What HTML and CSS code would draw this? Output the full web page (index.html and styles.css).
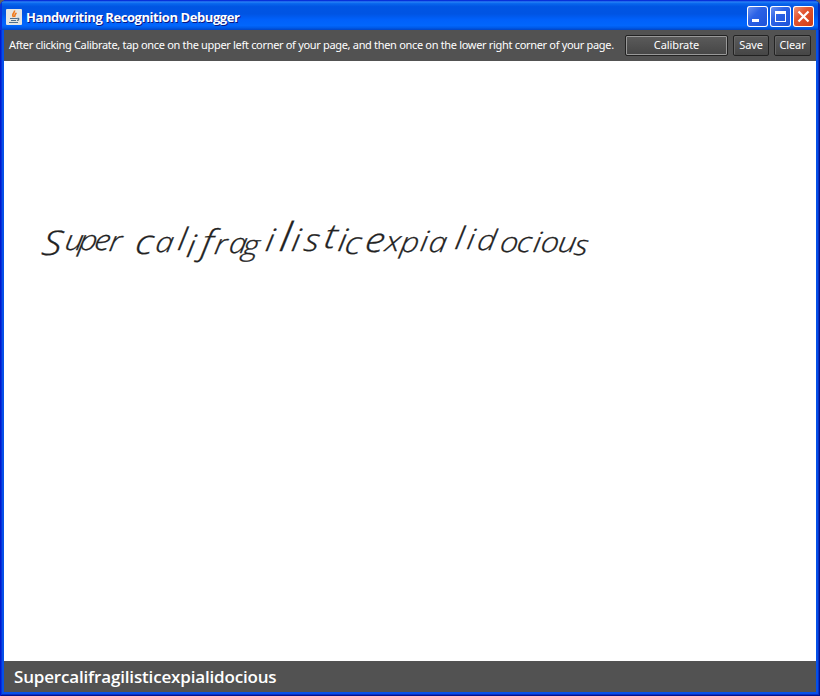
FILE: index.html
```html
<!DOCTYPE html>
<html lang="en">
<head>
<meta charset="utf-8">
<title>Handwriting Recognition Debugger</title>
<link rel="stylesheet" href="styles.css">
</head>
<body>
<div class="window">
  <header class="titlebar">
    <svg class="java" width="16" height="16" viewBox="0 0 16 16" fill="none">
      <rect width="16" height="16" rx="1" fill="#e6e6e2"/>
      <path d="M8.500 1.500C9 4 5 4.500 7.500 8M10.500 4C8 5.500 9.500 6 8.500 8" stroke="#ef7a1c" stroke-width="1.600"/>
      <path d="M4 9.500h7M5 11.500h5M3 13.500h9M11 9.500c2.500-1 2.500 1.500 0 2" stroke="#50708c" stroke-width="1.200"/>
    </svg>
    <h1 class="title">Handwriting Recognition Debugger</h1>
    <div class="controls">
      <button class="ctl" aria-label="Minimize"><svg width="21" height="21"><path d="M5 13h7v3H5z" fill="#fff"/></svg></button>
      <button class="ctl" aria-label="Maximize"><svg width="21" height="21"><path d="M5 5h11v11H5zM6 8v7h9V8z" fill="#fff" fill-rule="evenodd"/></svg></button>
      <button class="ctl close" aria-label="Close"><svg width="21" height="21"><path d="M5.500 5.500l10 10M15.500 5.500l-10 10" stroke="#fff" stroke-width="2.200"/></svg></button>
    </div>
  </header>
  <div class="toolbar">
    <p class="hint">After clicking Calibrate, tap once on the upper left corner of your page, and then once on the lower right corner of your page.</p>
    <button class="btn calibrate">Calibrate</button>
    <button class="btn save">Save</button>
    <button class="btn clear">Clear</button>
  </div>
  <main class="page">
    <svg class="ink" width="812" height="600" viewBox="4 61 812 600">
      <text class="script" transform="matrix(1.15 0 -.16 1 40.200 0)"><tspan class="cap" x="36" y="255">S</tspan><tspan x="55.500 67.500 81 94" y="250 250 250 251">uper</tspan><tspan class="cap" x="117" y="254">c</tspan><tspan x="134.500" y="252">a</tspan><tspan class="ascender" x="153.500" y="250">l</tspan><tspan class="ascender" x="162" y="257">i</tspan><tspan class="cap" x="174.500" y="254">f</tspan><tspan x="186 198.500 210.500" y="254 253 255">rag</tspan><tspan class="ascender" x="230" y="251">i</tspan><tspan class="tall" x="242" y="251">l</tspan><tspan class="ascender" x="252.500 263.500" y="251 251">is</tspan><tspan class="stem" x="280.500" y="248">t</tspan><tspan class="ascender" x="293 299" y="251 254">ic</tspan><tspan class="cap" x="316.500" y="252">e</tspan><tspan x="334 347.500 364.500 372" y="251 252 251 252">xpia</tspan><tspan class="ascender" x="394.500" y="249">l</tspan><tspan x="405 414 434 448.500 463 469.500 484.500 499" y="249 250 252 252 252 252 252 255">idocious</tspan></text>
    </svg>
  </main>
  <footer class="result">Supercalifragilisticexpialidocious</footer>
</div>
</body>
</html>
```
FILE: styles.css
```css
* { box-sizing: border-box; }
body { margin: 0; background: #62625f; }
.window {
  width: 820px; height: 696px; display: flex; flex-direction: column;
  padding: 0 4px 4px; overflow: hidden; border-radius: 7px 7px 0 0;
  background: #0550e8;
  box-shadow: inset 1px 0 #0019cf, inset -1px 0 #00138c, inset 0 -1px #00138c, inset 2px 0 #0831d9, inset -2px 0 #0830c5, inset 0 -2px #0830c5;
}
.titlebar {
  height: 30px; flex: none; margin: 0 -4px; padding: 3px 6px 0; display: flex; align-items: center;
  background: linear-gradient(#0831d9 0, #0831d9 3%, #2a84f8 6%, #0866ed 12%, #0055e3 22%, #0054e3 46%, #0060fa 65%, #0266fc 85%, #005be9 92%, #0144c5 100%);
  box-shadow: inset 2px 0 #0831d9, inset -2px 0 #0028b8;
}
.java { flex: none; }
.title {
  margin: 0 auto 0 4px; color: #fff; white-space: nowrap;
  font: bold 13px/20px "Open Sans", sans-serif; letter-spacing: -.43px;
  text-shadow: 1px 1px #0a1883;
}
.controls { display: flex; gap: 2px; }
.ctl {
  width: 21px; height: 21px; padding: 0; border: 0; border-radius: 3px;
  background: linear-gradient(135deg, #7297f2, #2c62e6 40%, #1c51d8);
  box-shadow: inset 0 0 0 1px #fff;
}
.ctl svg { display: block; }
.ctl.close { background: linear-gradient(135deg, #ef9b80, #e25531 40%, #cf3a12); }
.toolbar {
  height: 31px; flex: none; display: flex; align-items: center; padding: 0 5px;
  background: #525252; color: #fff; font: 11px/14px "Noto Sans", sans-serif;
}
.hint { margin: 0 11px 2px 0; width: 605px; flex: none; white-space: nowrap; letter-spacing: -.32px; }
.btn {
  height: 21px; flex: none; padding: 0 0 2px; border: 1px solid #222; border-radius: 2px;
  background: linear-gradient(#5b5b5b, #464646); color: #fff; font: inherit; letter-spacing: -.1px;
  box-shadow: inset 1px 1px #666;
}
.calibrate { width: 103px; box-shadow: inset 0 0 0 1px #999; }
.save { width: 36px; margin-left: 5px; }
.clear { width: 37px; margin-left: 5px; }
.page { flex: none; height: 600px; background: #fff; }
.ink { display: block; }
.script { font: italic 300 28px "Open Sans", sans-serif; fill: #222; stroke: #222; stroke-width: .3px; }
.cap { font-size: 34px; }
.ascender { font-size: 31px; }
.stem { font-size: 34px; }
.tall { font-size: 40px; }
.result {
  height: 31px; flex: none; padding-left: 10px; background: #525252; color: #fff;
  font: 600 17px/31px "Open Sans", sans-serif; letter-spacing: -.17px; white-space: nowrap;
}
```
